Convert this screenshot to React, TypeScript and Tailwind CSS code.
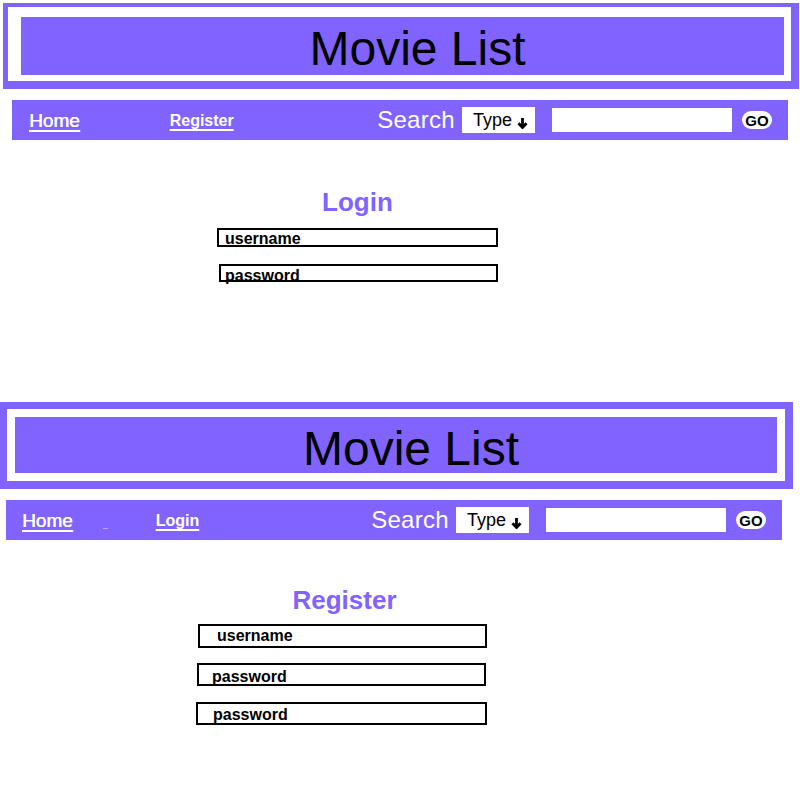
const PURPLE = "bg-[#8163ff]";

function Banner({ outer, white, inner }: { outer: string; white: string; inner: string }) {
  return (
    <div className={`${PURPLE} ${outer}`}>
      <div className={`bg-white h-full ${white}`}>
        <div className={`${PURPLE} h-full flex items-center justify-center ${inner}`}>
          <h1 className="text-[48px] leading-none text-black">Movie List</h1>
        </div>
      </div>
    </div>
  );
}

function DownArrow() {
  return (
    <svg width="11" height="12" viewBox="0 0 11 12" className="ml-[5px] mt-[6px]">
      <line x1="5.5" y1="1" x2="5.5" y2="10.5" stroke="black" strokeWidth="2.8" />
      <polyline points="1.5,6.3 5.5,10.5 9.5,6.3" fill="none" stroke="black" strokeWidth="2.8" />
    </svg>
  );
}

function NavBar({ className, second, dash }: { className: string; second: string; dash?: boolean }) {
  return (
    <nav className={`${PURPLE} w-[776px] h-[40px] flex items-center pr-[16px] text-white ${className}`}>
      <a className="text-[19px] leading-none underline underline-offset-[3px] decoration-[2px] [text-shadow:0.4px_0_0_white]">
        Home
      </a>
      {dash ? (
        <>
          <span className="ml-[30px] mt-[16px] w-[5px] h-[1px] bg-[#b9abff]" />
          <a className="ml-[48px] mt-[2px] text-[16px] font-bold leading-none underline underline-offset-[3px] decoration-[2px]">
            {second}
          </a>
        </>
      ) : (
        <a className="ml-[90px] mt-[2px] text-[16px] font-bold leading-none underline underline-offset-[3px] decoration-[2px]">
          {second}
        </a>
      )}

      <div className="ml-auto flex items-center">
        <span className="text-[24px] leading-none tracking-[0.3px]">Search</span>
        <div className="ml-[7px] w-[73px] h-[26px] bg-white flex items-center pl-[11px] text-black">
          <span className="text-[18px] leading-none">Type</span>
          <DownArrow />
        </div>
        <div className="ml-[17px] w-[180px] h-[24px] bg-white" />
        <button className="ml-[10px] w-[30px] h-[18px] rounded-full bg-white text-black text-[15px] font-bold leading-none flex items-center justify-center">
          GO
        </button>
      </div>
    </nav>
  );
}

export default function App() {
  return (
    <div className="w-[800px] h-[800px] bg-white overflow-hidden font-['Liberation_Sans',Arial,sans-serif]">
      {/* login mockup */}
      <Banner
        outer="mt-[3px] ml-[3px] w-[796px] h-[86px] pl-[5px] pt-[4px] pr-[8px] pb-[8px]"
        white="pl-[13px] pt-[10px] pr-[7px] pb-[6px]"
        inner="pl-[30px] pt-[6px]"
      />
      <NavBar className="mt-[11px] ml-[12px] pl-[17px]" second="Register" />

      <div className="ml-[217px] w-[281px]">
        <h2 className="mt-[49px] h-[26px] text-center text-[26px] font-bold leading-none text-[#8163ff]">Login</h2>
        <div className="mt-[13px] w-[281px] h-[19px] border-2 border-black pl-[6px] pt-[1px] text-[16px] font-bold leading-none">
          username
        </div>
        <div className="mt-[17px] ml-[2px] w-[279px] h-[18px] border-2 border-black pl-[4px] pt-[2px] text-[16px] font-bold leading-none">
          password
        </div>
      </div>

      {/* register mockup */}
      <Banner
        outer="mt-[120px] w-[793px] h-[87px] pl-[7px] pt-[7px] pr-[8px] pb-[8px]"
        white="p-[8px]"
        inner="pl-[30px] pt-[8px]"
      />
      <NavBar className="mt-[11px] ml-[6px] pl-[16px]" second="Login" dash />

      <div className="ml-[196px] w-[291px]">
        <h2 className="mt-[47px] h-[26px] pl-[6px] text-center text-[26px] font-bold leading-none text-[#8163ff]">Register</h2>
        <div className="mt-[11px] ml-[2px] w-[289px] h-[24px] border-2 border-black pl-[17px] pt-[2px] text-[16px] font-bold leading-none">
          username
        </div>
        <div className="mt-[15px] ml-[1px] w-[289px] h-[23px] border-2 border-black pl-[13px] pt-[4px] text-[16px] font-bold leading-none">
          password
        </div>
        <div className="mt-[16px] w-[291px] h-[23px] border-2 border-black pl-[15px] pt-[3px] text-[16px] font-bold leading-none">
          password
        </div>
      </div>
    </div>
  );
}
